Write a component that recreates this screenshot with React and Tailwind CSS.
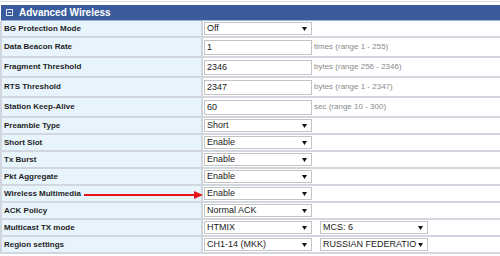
import React from 'react';

const rows = [
    { label: 'BG Protection Mode', type: 'select', value: 'Off' },
    { label: 'Data Beacon Rate', type: 'input', value: '1', hint: 'times (range 1 - 255)' },
    { label: 'Fragment Threshold', type: 'input', value: '2346', hint: 'bytes (range 256 - 2346)' },
    { label: 'RTS Threshold', type: 'input', value: '2347', hint: 'bytes (range 1 - 2347)' },
    { label: 'Station Keep-Alive', type: 'input', value: '60', hint: 'sec (range 10 - 300)' },
    { label: 'Preamble Type', type: 'select', value: 'Short' },
    { label: 'Short Slot', type: 'select', value: 'Enable' },
    { label: 'Tx Burst', type: 'select', value: 'Enable' },
    { label: 'Pkt Aggregate', type: 'select', value: 'Enable' },
    { label: 'Wireless Multimedia', type: 'select', value: 'Enable', arrow: true },
    { label: 'ACK Policy', type: 'select', value: 'Normal ACK' },
    { label: 'Multicast TX mode', type: 'select', value: 'HTMIX', second: 'MCS: 6' },
    { label: 'Region settings', type: 'select', value: 'CH1-14 (MKK)', second: 'RUSSIAN FEDERATIO' },
];

// fake select box, drawn so it looks the same everywhere
const SelectBox = ({ value }) => (
    <div className="w-[108px] h-[13px] border border-[#c4c4c4] bg-white flex items-center justify-between pl-[2px] pr-[4px] text-[9px] leading-none text-[#222]">
        <span>{value}</span>
        <svg width="5" height="4" viewBox="0 0 5 4">
            <path d="M0 0 L5 0 L2.5 4 Z" fill="#111" />
        </svg>
    </div>
);

const App = () => {
    return (
        <div className="w-[500px] h-[256px] bg-white overflow-hidden relative" style={{ fontFamily: '"Liberation Sans", Arial, sans-serif' }}>
            <div className="h-[1px]" />
            <div className="h-[1px] bg-[#d8dce4]" />
            <div className="h-[3px]" />

            {/* section header */}
            <div className="ml-[1px] h-[15px] bg-[#3a5b9c] flex items-center text-white">
                <div className="ml-[5px] w-[7px] h-[7px] border border-[#dfe6f2] flex items-center justify-center">
                    <div className="w-[3px] h-[1px] bg-[#dfe6f2]" />
                </div>
                <span className="ml-[6px] text-[10px] font-bold leading-none">Advanced Wireless</span>
            </div>
            <div className="ml-[1px] h-[1px] bg-[#9fb2d4]" />

            <div className="border-l-2 border-[#d2d6de]">
                {rows.map((row) => (
                    <div
                        key={row.label}
                        className={`flex border-b-2 border-[#d2d6de] ${row.type === 'input' ? 'h-[20px]' : 'h-[17px]'}`}
                    >
                        <div className="w-[199px] bg-[#e8f4fc] flex items-center pl-[2px] text-[8px] font-bold text-[#1e1e1e]">
                            {row.label}
                        </div>
                        <div className="w-[2px] bg-[#d2d6de]" />
                        <div className="flex-1 flex items-center pl-[1px]">
                            {row.type === 'input' ? (
                                <>
                                    <div className="w-[108px] h-[15px] border border-[#c4c4c4] bg-white flex items-center pl-[2px] text-[9px] leading-none text-[#222]">
                                        {row.value}
                                    </div>
                                    <span className="ml-[2px] text-[8px] text-[#8a8a8a]">{row.hint}</span>
                                </>
                            ) : (
                                <div className="flex gap-[8px]">
                                    <SelectBox value={row.value} />
                                    {row.second && <SelectBox value={row.second} />}
                                </div>
                            )}
                        </div>
                    </div>
                ))}
            </div>

            {/* red pointer arrow */}
            <svg className="absolute left-[84px] top-[190px]" width="120" height="10" viewBox="0 0 120 10">
                <line x1="0" y1="5" x2="111" y2="5" stroke="#e8141c" strokeWidth="2" />
                <path d="M110 1 L119 5 L110 9 Z" fill="#e8141c" />
            </svg>
        </div>
    );
};

export default App;
